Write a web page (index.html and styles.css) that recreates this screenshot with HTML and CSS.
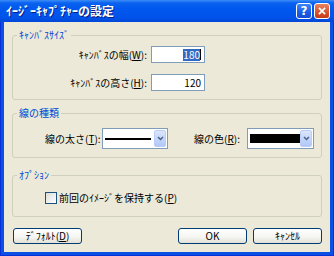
FILE: index.html
```html
<!DOCTYPE html>
<html lang="ja">
  <head>
    <meta charset="UTF-8" />
    <title>ｲｰｼﾞｰｷｬﾌﾟﾁｬｰの設定</title>
    <link rel="stylesheet" href="styles.css">
  </head>
  <body>
    <div class="window">
      <div class="titlebar">
        <span class="title">ｲｰｼﾞｰｷｬﾌﾟﾁｬｰの設定</span>
        <div class="caption-buttons">
          <span class="cap-btn help">?</span>
          <span class="cap-btn close">
            <svg viewBox="0 0 16 16" width="16" height="16">
              <path d="M4.5 4.5l7 7M11.5 4.5l-7 7" />
            </svg>
          </span>
        </div>
      </div>

      <div class="client">
        <fieldset class="group group-size">
          <legend>ｷｬﾝﾊﾞｽｻｲｽﾞ</legend>
          <div class="size-grid">
            <label>ｷｬﾝﾊﾞｽの幅(<u>W</u>):</label>
            <div class="textbox"><span class="sel">180</span><span class="caret"></span></div>
            <label>ｷｬﾝﾊﾞｽの高さ(<u>H</u>):</label>
            <div class="textbox">120</div>
          </div>
        </fieldset>

        <fieldset class="group group-line">
          <legend>線の種類</legend>
          <div class="line-row">
            <label class="lbl-thick">線の太さ(<u>T</u>):</label>
            <div class="combo combo-thick">
              <span class="preview-line"></span>
              <span class="drop">
                <svg viewBox="0 0 7 5" width="7" height="5">
                  <path d="M1 1l2.5 2.5L6 1" />
                </svg>
              </span>
            </div>
            <label class="lbl-color">線の色(<u>R</u>):</label>
            <div class="combo combo-color">
              <span class="swatch"></span>
              <span class="drop">
                <svg viewBox="0 0 7 5" width="7" height="5">
                  <path d="M1 1l2.5 2.5L6 1" />
                </svg>
              </span>
            </div>
          </div>
        </fieldset>

        <fieldset class="group group-option">
          <legend>ｵﾌﾟｼｮﾝ</legend>
          <div class="check-row">
            <span class="checkbox"></span>
            <label>前回のｲﾒｰｼﾞを保持する(<u>P</u>)</label>
          </div>
        </fieldset>

        <div class="buttons">
          <button class="btn">ﾃﾞﾌｫﾙﾄ(<u>D</u>)</button>
          <button class="btn btn-ok">OK</button>
          <button class="btn btn-cancel">ｷｬﾝｾﾙ</button>
        </div>
      </div>
    </div>
  </body>
</html>
```

FILE: styles.css
```css
body {
  margin: 0;
  background: #ffffff;
}

.window {
  width: 334px;
  height: 256px;
  box-sizing: border-box;
  display: flex;
  flex-direction: column;
  background: #0a50e2;
  box-shadow: inset 1px 0 #0831d9, inset -1px 0 #0831d9, inset 0 -1px #0831d9;
  font-family: "Noto Sans CJK JP", sans-serif;
  font-size: 10px;
  line-height: 12px;
  color: #000;
}

.titlebar {
  height: 22px;
  flex: none;
  display: flex;
  align-items: center;
  justify-content: space-between;
  padding: 0 4px 0 6px;
  background: linear-gradient(
    #3d8df5 0,
    #0a62f0 3px,
    #0058ee 40%,
    #0053ea 80%,
    #0046d8 100%
  );
}

.title {
  color: #fff;
  font-weight: bold;
  font-size: 12px;
  text-shadow: 1px 1px #0a1883;
}

.caption-buttons {
  display: flex;
  gap: 2px;
}

.cap-btn {
  width: 16px;
  height: 16px;
  box-sizing: border-box;
  border: 1px solid #fff;
  border-radius: 3px;
  display: flex;
  align-items: center;
  justify-content: center;
}

.help {
  background: linear-gradient(#3c86f8, #1d5be6 60%, #1a4cd2);
  color: #fff;
  font-family: "DejaVu Sans", sans-serif;
  font-weight: bold;
  font-size: 12px;
}

.close {
  background: linear-gradient(#e9835f, #d8512d 60%, #c23c18);
}

.close svg {
  stroke: #fff;
  stroke-width: 2;
  fill: none;
}

.client {
  flex: 1;
  margin: 0 4px 4px;
  padding: 0 8px;
  background: #ece9d8;
  display: flex;
  flex-direction: column;
}

.group {
  margin: 0;
  min-width: 0;
  border: 1px solid #d0d0bf;
  border-radius: 3px;
}

.group legend {
  margin-left: 4px;
  padding: 0 2px;
  color: #0046d5;
  line-height: 12px;
}

.group-size {
  margin-top: 7px;
  padding: 5px 0 8px;
}

.group-line {
  margin-top: 7px;
  padding: 9px 0 8px;
}

.group-option {
  margin-top: 11px;
  padding: 11px 0 12px;
}

.size-grid {
  display: grid;
  grid-template-columns: 134px 54px;
  column-gap: 4px;
  row-gap: 11px;
  align-items: center;
}

.size-grid label {
  text-align: right;
  white-space: nowrap;
}

.textbox {
  height: 17px;
  box-sizing: border-box;
  border: 1px solid #7f9db9;
  background: #fff;
  display: flex;
  align-items: center;
  justify-content: flex-end;
  padding-right: 3px;
}

.sel {
  background: #316ac5;
  color: #fff;
}

.caret {
  width: 1px;
  height: 11px;
  background: #000;
}

.line-row {
  display: flex;
  align-items: center;
  padding-left: 32px;
}

.line-row label {
  white-space: nowrap;
}

.lbl-thick {
  width: 57px;
}

.lbl-color {
  width: 53px;
  margin-left: 26px;
}

.combo {
  height: 21px;
  box-sizing: border-box;
  border: 1px solid #7f9db9;
  background: #fff;
  display: flex;
  align-items: center;
  padding: 1px;
}

.combo-thick {
  width: 66px;
}

.combo-color {
  width: 67px;
}

.preview-line {
  flex: 1;
  height: 2px;
  margin: 0 3px 0 1px;
  background: #000;
}

.swatch {
  width: 50px;
  height: 9px;
  margin-left: 1px;
  margin-right: auto;
  background: #000;
}

.drop {
  width: 12px;
  align-self: stretch;
  box-sizing: border-box;
  border: 1px solid #bacdf6;
  border-radius: 2px;
  background: linear-gradient(#dbe6fd, #c0d3fb 60%, #b1c8f8);
  display: flex;
  align-items: center;
  justify-content: center;
}

.drop svg {
  stroke: #4d6185;
  stroke-width: 1.5;
  fill: none;
}

.check-row {
  display: flex;
  align-items: center;
  gap: 2px;
  padding-left: 32px;
}

.checkbox {
  width: 12px;
  height: 12px;
  box-sizing: border-box;
  border: 1px solid #1c5180;
  background: linear-gradient(135deg, #dcdcd7, #fff);
}

.buttons {
  display: flex;
  margin-top: 11px;
  padding-left: 1px;
}

.btn {
  width: 69px;
  height: 16px;
  padding: 0;
  border: 1px solid #003c74;
  border-radius: 3px;
  background: linear-gradient(#fff, #f4f4f0 60%, #e2e0d6);
  font-family: "Noto Sans CJK JP", sans-serif;
  font-size: 10px;
  line-height: 12px;
  color: #000;
}

.btn-ok {
  margin-left: auto;
}

.btn-cancel {
  margin-left: 6px;
}
```
